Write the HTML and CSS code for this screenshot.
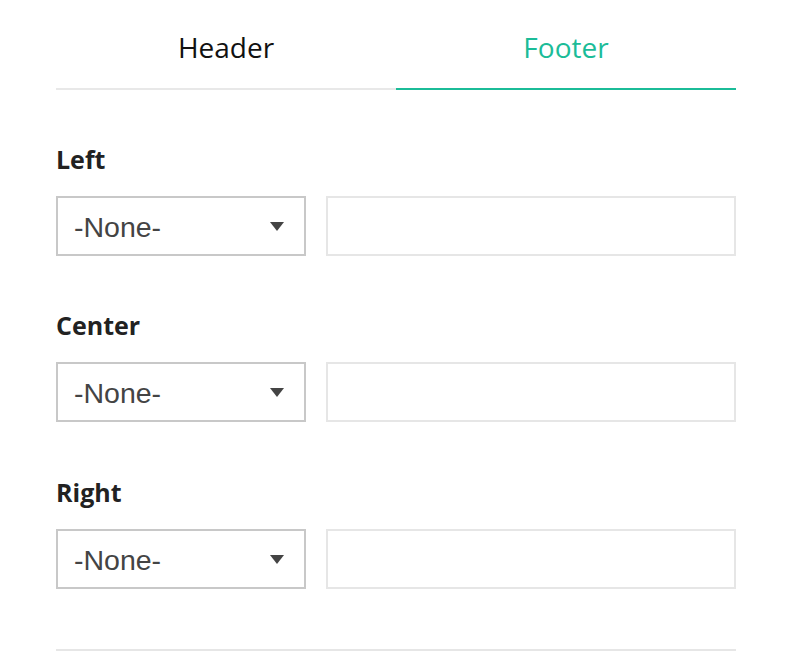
FILE: index.html
```html
<!DOCTYPE html>
<html>
<head>
<meta charset="utf-8">
<link rel="stylesheet" href="styles.css">
</head>
<body>
<div class="panel">
  <div class="tabs">
    <div class="tab">Header</div>
    <div class="tab active">Footer</div>
  </div>
  <div class="field">
    <div class="label">Left</div>
    <div class="row">
      <div class="select"><span class="value">-None-</span><span class="caret"></span></div>
      <div class="input"></div>
    </div>
  </div>
  <div class="field">
    <div class="label">Center</div>
    <div class="row">
      <div class="select"><span class="value">-None-</span><span class="caret"></span></div>
      <div class="input"></div>
    </div>
  </div>
  <div class="field field-last">
    <div class="label">Right</div>
    <div class="row">
      <div class="select"><span class="value">-None-</span><span class="caret"></span></div>
      <div class="input"></div>
    </div>
  </div>
  <div class="divider"></div>
</div>
</body>
</html>
```
FILE: styles.css
```css
html, body {
  margin: 0;
  padding: 0;
  background: #ffffff;
}
.panel {
  width: 680px;
  margin-left: 56px;
  font-family: "Open Sans", "DejaVu Sans", sans-serif;
}
.tabs {
  display: flex;
}
.tab {
  flex: 1;
  text-align: center;
  font-size: 28px;
  line-height: 38px;
  padding-top: 28px;
  padding-bottom: 22px;
  color: #111111;
  border-bottom: 2px solid #e8e8e8;
}
.tab.active {
  color: #1bbc98;
  border-bottom-color: #1bbc98;
}
.field {
  margin-top: 53px;
}
.field-last {
  margin-top: 54px;
}
.label {
  font-size: 25px;
  line-height: 32px;
  font-weight: 700;
  color: #222222;
  margin-bottom: 21px;
}
.row {
  display: flex;
  gap: 20px;
}
.select {
  box-sizing: border-box;
  width: 250px;
  height: 60px;
  border: 2px solid #c8c8c8;
  display: flex;
  align-items: center;
  justify-content: space-between;
  padding: 0 20px 0 16px;
}
.value {
  font-family: "Liberation Sans", Arial, sans-serif;
  font-size: 28.5px;
  color: #444444;
  padding-top: 3px;
}
.caret {
  width: 0;
  height: 0;
  border-left: 7px solid transparent;
  border-right: 7px solid transparent;
  border-top: 9px solid #444444;
}
.input {
  box-sizing: border-box;
  flex: 1;
  height: 60px;
  border: 2px solid #e6e6e6;
}
.divider {
  margin-top: 60px;
  height: 2px;
  background: #e6e6e6;
}
```
